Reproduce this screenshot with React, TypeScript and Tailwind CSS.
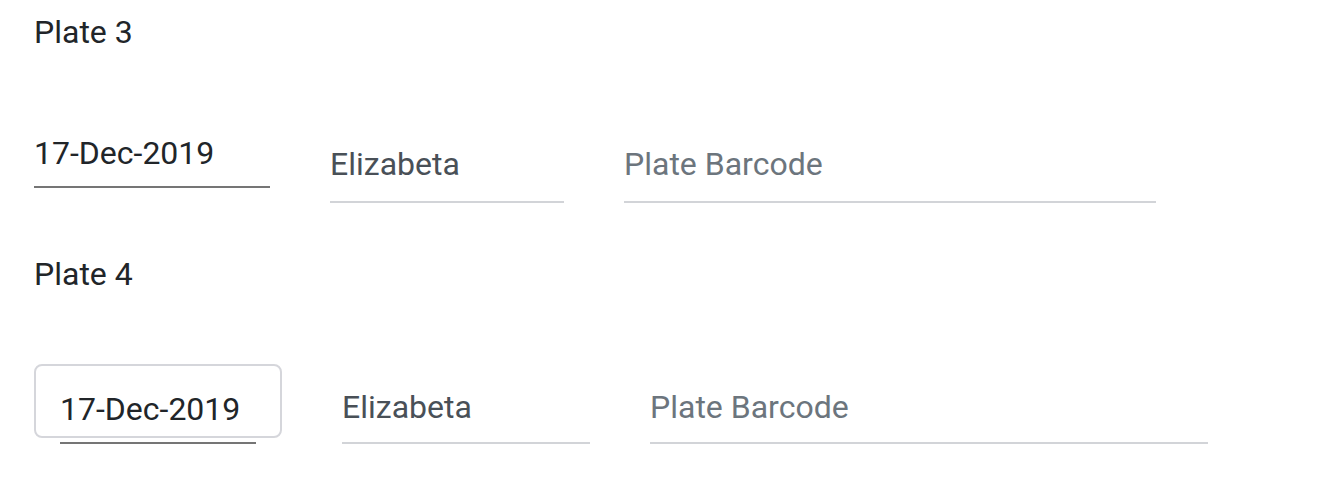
const font = "font-['Roboto',sans-serif]";

function LineField({ value, placeholder, width, className = "", pad = "pb-[18px]" }: { value?: string; placeholder?: string; width: string; className?: string; pad?: string }) {
  return (
    <div className={`${width} ${className}`}>
      <input
        readOnly
        defaultValue={value}
        placeholder={placeholder}
        className={`${font} ${pad} block h-[38px] w-full border-b-2 border-[#d2d4d8] bg-transparent p-0 box-content text-[32px] leading-[38px] text-[#495057] outline-none placeholder:text-[#6c757d]`}
      />
    </div>
  );
}

function DateField({ value }: { value: string }) {
  return (
    <input
      readOnly
      defaultValue={value}
      className={`${font} block h-[38px] w-full border-b-2 border-[#757575] bg-transparent p-0 pb-[14px] box-content text-[32px] leading-[38px] text-[#212529] outline-none`}
    />
  );
}

export default function App() {
  return (
    <div className={`${font} min-h-[496px] bg-white pl-[34px] pt-[13px] text-[#212529]`}>
      {/* Plate 3 */}
      <p className="h-[38px] text-[32px] leading-[38px]">Plate 3</p>
      <div className="mt-[83px] flex items-start gap-[60px]">
        <div className="w-[236px]">
          <DateField value="17-Dec-2019" />
        </div>
        <LineField value="Elizabeta" width="w-[234px]" className="mt-[11px]" />
        <LineField placeholder="Plate Barcode" width="w-[532px]" className="mt-[11px]" />
      </div>

      {/* Plate 4 */}
      <p className="mt-[52px] h-[38px] text-[32px] leading-[38px]">Plate 4</p>
      <div className="mt-[71px] flex items-start gap-[60px]">
        <div className="h-[74px] w-[248px] rounded-lg border-2 border-[#d5d6db] pl-[24px] pt-[24px]">
          <div className="w-[196px]">
            <DateField value="17-Dec-2019" />
          </div>
        </div>
        <LineField value="Elizabeta" width="w-[248px]" className="mt-[24px]" pad="pb-[16px]" />
        <LineField placeholder="Plate Barcode" width="w-[558px]" className="mt-[24px]" pad="pb-[16px]" />
      </div>
    </div>
  );
}
